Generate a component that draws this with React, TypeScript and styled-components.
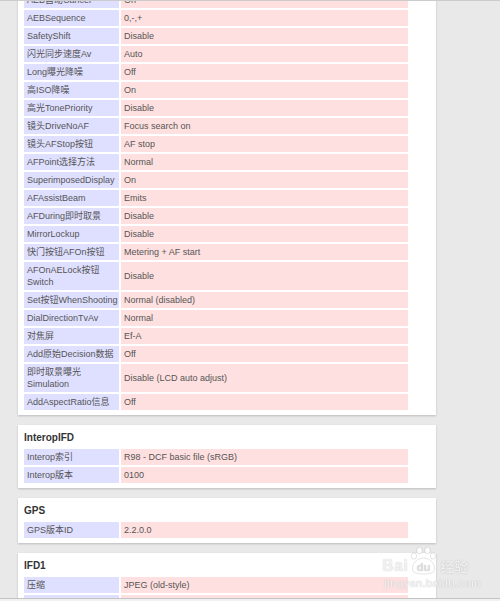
import React from 'react';
import styled, { createGlobalStyle } from 'styled-components';

type Row = [string, string];

interface Section {
  title?: string;
  rows: Row[];
}

const sections: Section[] = [
  {
    rows: [
      ['AEB自动Cancel', 'On'],
      ['AEBSequence', '0,-,+'],
      ['SafetyShift', 'Disable'],
      ['闪光同步速度Av', 'Auto'],
      ['Long曝光降噪', 'Off'],
      ['高ISO降噪', 'On'],
      ['高光TonePriority', 'Disable'],
      ['镜头DriveNoAF', 'Focus search on'],
      ['镜头AFStop按钮', 'AF stop'],
      ['AFPoint选择方法', 'Normal'],
      ['SuperimposedDisplay', 'On'],
      ['AFAssistBeam', 'Emits'],
      ['AFDuring即时取景', 'Disable'],
      ['MirrorLockup', 'Disable'],
      ['快门按钮AFOn按钮', 'Metering + AF start'],
      ['AFOnAELock按钮\nSwitch', 'Disable'],
      ['Set按钮WhenShooting', 'Normal (disabled)'],
      ['DialDirectionTvAv', 'Normal'],
      ['对焦屏', 'Ef-A'],
      ['Add原始Decision数据', 'Off'],
      ['即时取景曝光\nSimulation', 'Disable (LCD auto adjust)'],
      ['AddAspectRatio信息', 'Off'],
    ],
  },
  {
    title: 'InteropIFD',
    rows: [
      ['Interop索引', 'R98 - DCF basic file (sRGB)'],
      ['Interop版本', '0100'],
    ],
  },
  {
    title: 'GPS',
    rows: [['GPS版本ID', '2.2.0.0']],
  },
  {
    title: 'IFD1',
    rows: [
      ['压缩', 'JPEG (old-style)'],
      ['X分辨率', '72'],
    ],
  },
];

const GlobalStyle = createGlobalStyle`
  html, body {
    margin: 0;
    padding: 0;
    overflow: hidden;
    background: #e9e9e9;
    font-family: "Liberation Sans", Arial, "Noto Sans CJK SC", sans-serif;
  }
`;

/* page is shown scrolled, the first card starts above the window */
const Page = styled.div`
  display: flex;
  flex-direction: column;
  gap: 10px;
  padding-left: 18px;
  margin-top: -14px;
`;

const Card = styled.section`
  width: 418px;
  box-sizing: border-box;
  padding: 6px 6px 5px 6px;
  background: #fff;
  box-shadow: 0 1px 2px rgba(0, 0, 0, 0.2);
`;

const Title = styled.h3`
  margin: 0 0 4px 0;
  font-size: 10px;
  line-height: 14px;
  font-weight: bold;
  color: #333;
`;

const Table = styled.div`
  display: grid;
  grid-template-columns: 95px 287px;
  gap: 2px;
`;

const Cell = styled.div<{ $kind: 'key' | 'value' }>`
  display: flex;
  align-items: center;
  padding: 2px 3px;
  font-size: 9px;
  line-height: 12px;
  color: #555;
  white-space: pre;
  background: ${(p) => (p.$kind === 'key' ? '#dfdfff' : '#ffe0e0')};
`;

const TopEdge = styled.div`
  position: fixed;
  left: 0;
  right: 0;
  top: 0;
  height: 1px;
  background: #cccccc;
`;

const BottomEdge = styled.div`
  position: fixed;
  left: 0;
  right: 0;
  bottom: 0;
  height: 2px;
  border-top: 1px solid #c4c4c4;
  background: #f1f1f1;
`;

const Watermark = styled.div`
  position: fixed;
  left: 382px;
  top: 546px;
  display: flex;
  flex-direction: column;
  align-items: flex-start;
  color: rgba(255, 255, 255, 0.8);
  text-shadow: 0 0 1px rgba(0, 0, 0, 0.3);
  pointer-events: none;
`;

const MarkLine = styled.div`
  display: flex;
  align-items: flex-end;
  gap: 2px;
`;

const MarkBrand = styled.span`
  font-family: "Liberation Sans", Arial, sans-serif;
  font-size: 16px;
  font-weight: bold;
  line-height: 18px;
  letter-spacing: 0.5px;
`;

const MarkCn = styled.span`
  font-family: "Noto Sans CJK SC", sans-serif;
  font-size: 14px;
  font-weight: bold;
  line-height: 18px;
  margin-left: 1px;
`;

const MarkUrl = styled.span`
  font-family: "Liberation Sans", Arial, sans-serif;
  font-size: 11px;
  font-weight: bold;
  line-height: 12px;
  margin-top: 2px;
  margin-left: 2px;
`;

const Paw = () => (
  <svg width="27" height="29" viewBox="0 0 27 29">
    <g fill="rgba(255,255,255,0.85)" stroke="rgba(0,0,0,0.18)" strokeWidth="0.6">
      <ellipse cx="4" cy="10" rx="2.6" ry="3.2" />
      <ellipse cx="9.5" cy="4.5" rx="2.8" ry="3.4" />
      <ellipse cx="17.5" cy="4.5" rx="2.8" ry="3.4" />
      <ellipse cx="23" cy="10" rx="2.6" ry="3.2" />
      <path d="M13.5 12 C7 12 2 18 2.5 23 C3 27 7 28 13.5 28 C20 28 24 27 24.5 23 C25 18 20 12 13.5 12 Z" />
    </g>
    <text
      x="13.5"
      y="25"
      textAnchor="middle"
      fontFamily="Liberation Sans, Arial, sans-serif"
      fontWeight="bold"
      fontSize="11"
      fill="#e2e2e2"
    >
      du
    </text>
  </svg>
);

export default function App() {
  return (
    <>
      <GlobalStyle />
      <Page>
        {sections.map((section, i) => (
          <Card key={i}>
            {section.title && <Title>{section.title}</Title>}
            <Table>
              {section.rows.map(([key, value]) => (
                <React.Fragment key={key}>
                  <Cell $kind="key">{key}</Cell>
                  <Cell $kind="value">{value}</Cell>
                </React.Fragment>
              ))}
            </Table>
          </Card>
        ))}
      </Page>
      <TopEdge />
      <BottomEdge />
      <Watermark>
        <MarkLine>
          <MarkBrand>Bai</MarkBrand>
          <Paw />
          <MarkCn>经验</MarkCn>
        </MarkLine>
        <MarkUrl>jingyan.baidu.com</MarkUrl>
      </Watermark>
    </>
  );
}
